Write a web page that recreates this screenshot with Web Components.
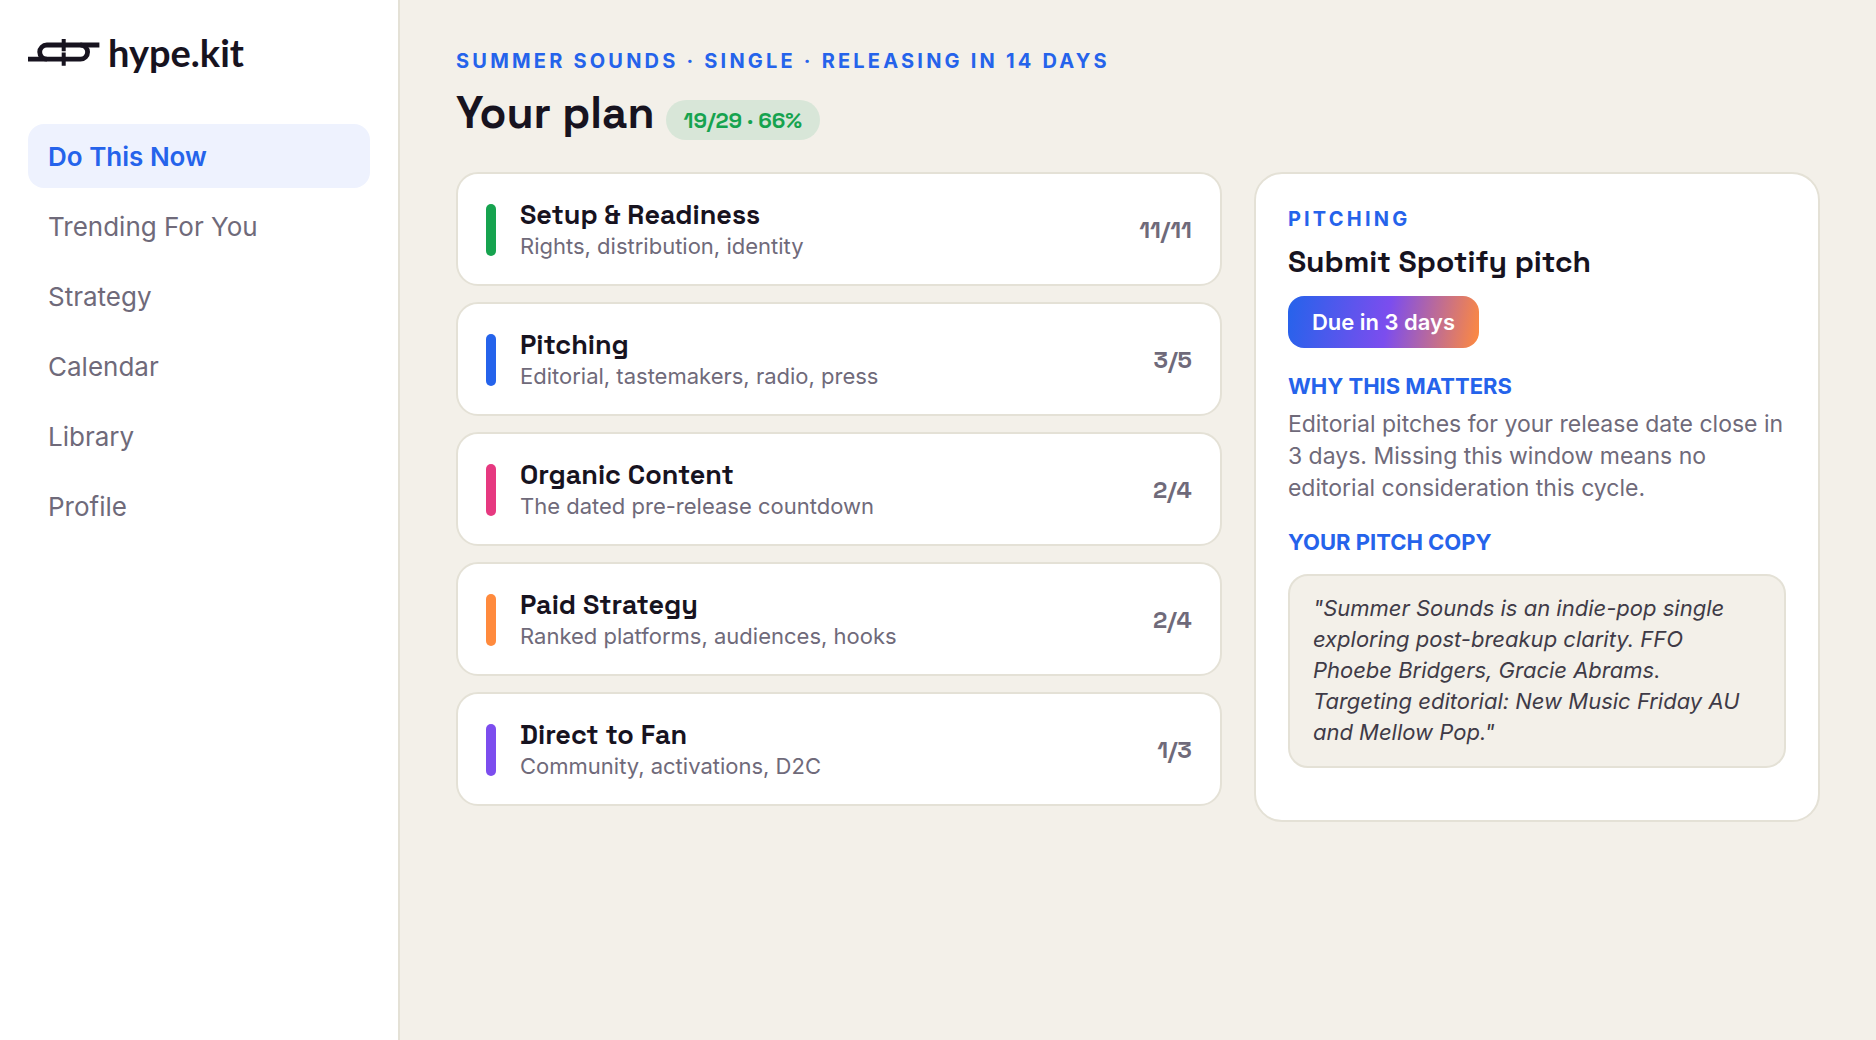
<!DOCTYPE html>
<html lang="en">
<head>
<meta charset="utf-8">
<meta name="viewport" content="width=device-width, initial-scale=1">
<title>hype.kit</title>
<style>
  :root {
    --ink: #17131f;
    --muted: #6f6a7a;
    --blue: #2563eb;
    --line: #e4e1d6;
    --paper: #f3f0e9;
    --display: "Space Grotesk", Inter, "Liberation Sans", sans-serif;
  }
  body {
    margin: 0;
    background: var(--paper);
    color: var(--ink);
    font-family: Inter, "Liberation Sans", sans-serif;
  }
</style>
</head>
<body>
<hk-app>
  <hk-sidebar slot="sidebar">
    <hk-logo slot="logo"></hk-logo>
    <hk-nav-item active>Do This Now</hk-nav-item>
    <hk-nav-item>Trending For You</hk-nav-item>
    <hk-nav-item>Strategy</hk-nav-item>
    <hk-nav-item>Calendar</hk-nav-item>
    <hk-nav-item>Library</hk-nav-item>
    <hk-nav-item>Profile</hk-nav-item>
  </hk-sidebar>
  <hk-plan-header>
    <span slot="eyebrow">SUMMER SOUNDS · SINGLE · RELEASING IN 14 DAYS</span>
    Your plan
    <span slot="progress">19/29 · 66%</span>
  </hk-plan-header>
  <hk-board>
    <hk-track style="--accent:#16a34f">Setup &amp; Readiness<span slot="note">Rights, distribution, identity</span><span slot="count">11/11</span></hk-track>
    <hk-track style="--accent:#2563eb">Pitching<span slot="note">Editorial, tastemakers, radio, press</span><span slot="count">3/5</span></hk-track>
    <hk-track style="--accent:#e63980">Organic Content<span slot="note">The dated pre-release countdown</span><span slot="count">2/4</span></hk-track>
    <hk-track style="--accent:#ff8a3d">Paid Strategy<span slot="note">Ranked platforms, audiences, hooks</span><span slot="count">2/4</span></hk-track>
    <hk-track style="--accent:#7c4dee">Direct to Fan<span slot="note">Community, activations, D2C</span><span slot="count">1/3</span></hk-track>
    <hk-task slot="detail">
      <span slot="eyebrow">PITCHING</span>
      <span slot="title">Submit Spotify pitch</span>
      <span slot="due">Due in 3 days</span>
      <span slot="why">Editorial pitches for your release date close in 3 days. Missing this window means no editorial consideration this cycle.</span>
      <span slot="copy">"Summer Sounds is an indie-pop single exploring post-breakup clarity. FFO Phoebe Bridgers, Gracie Abrams. Targeting editorial: New Music Friday AU and Mellow Pop."</span>
    </hk-task>
  </hk-board>
</hk-app>

<script>
  const define = (name, html) => {
    const template = document.createElement('template');
    template.innerHTML = html;
    customElements.define(name, class extends HTMLElement {
      constructor() {
        super();
        this.attachShadow({ mode: 'open' }).append(template.content.cloneNode(true));
      }
    });
  };

  define('hk-app', `
    <style>
      :host { display: flex; min-height: 100vh; }
      main { flex: 1; min-width: 0; box-sizing: border-box; padding: 48px 56px; }
    </style>
    <slot name="sidebar"></slot>
    <main><slot></slot></main>`);

  define('hk-sidebar', `
    <style>
      :host { display: flex; flex-direction: column; gap: 48px; flex: none; width: 400px; box-sizing: border-box;
        padding: 28px; background: #fff; border-right: 2px solid var(--line); }
      nav { display: flex; flex-direction: column; gap: 6px; }
    </style>
    <slot name="logo"></slot>
    <nav aria-label="Main"><slot></slot></nav>`);

  define('hk-logo', `
    <style>
      :host { display: flex; align-items: center; gap: 8px; height: 48px; color: var(--ink); }
      svg { flex: none; width: 72px; height: 28px; }
      span { font: 700 38px/48px Lato, sans-serif; }
    </style>
    <svg viewBox="0 0 72 28" aria-hidden="true">
      <g fill="none" stroke="currentColor" stroke-width="4.800">
        <path d="M71.400 7H18.800a7.100 7.100 0 0 0 0 14.200"/>
        <path d="M0 21.200H52.500a7.100 7.100 0 0 0 0-14.200"/>
        <path stroke-width="4" d="M35.700 1V13.200M35.700 14.600V27.700"/>
      </g>
    </svg>
    <span>hype.kit</span>`);

  define('hk-nav-item', `
    <style>
      :host { display: block; }
      a { display: block; padding: 17px 20px 15px; border-radius: 16px; color: var(--muted);
        font-size: 26px; line-height: 32px; text-decoration: none; }
      :host([active]) a { background: #eef2fe; color: var(--blue); font-weight: 600; }
    </style>
    <a href="#"><slot></slot></a>`);

  define('hk-plan-header', `
    <style>
      :host { display: block; margin-bottom: 28px; }
      p { margin: 0 0 8px; color: var(--blue); font-size: 20px; line-height: 26px; font-weight: 700; letter-spacing: 0.16em; }
      div { display: flex; align-items: center; gap: 11px; }
      h1 { margin: 0; font: 600 44px/62px var(--display); }
      .pill { margin-top: 14px; padding: 6px 18px; border-radius: 20px; background: #d8e6d8; color: #16a34f;
        font: 600 22px/28px var(--display); }
    </style>
    <p><slot name="eyebrow"></slot></p>
    <div><h1><slot></slot></h1><span class="pill"><slot name="progress"></slot></span></div>`);

  define('hk-board', `
    <style>
      :host { display: grid; grid-template-columns: 1.15fr 0.85fr; gap: 32px; align-items: start; }
      section { display: flex; flex-direction: column; gap: 16px; min-width: 0; }
    </style>
    <section><slot></slot></section>
    <slot name="detail"></slot>`);

  define('hk-track', `
    <style>
      :host { display: flex; align-items: center; gap: 24px; padding: 25px 28px 24px; background: #fff;
        border: 2px solid var(--line); border-radius: 22px; }
      i { flex: none; width: 10px; height: 52px; border-radius: 5px; background: var(--accent); }
      div { flex: 1; min-width: 0; }
      h2 { margin: 0 0 1px; font: 700 27px/32px var(--display); }
      p { margin: 0; color: var(--muted); font-size: 22px; line-height: 28px; }
      b { color: var(--muted); font: 600 24px/32px var(--display); }
    </style>
    <i></i>
    <div><h2><slot></slot></h2><p><slot name="note"></slot></p></div>
    <b><slot name="count"></slot></b>`);

  define('hk-task', `
    <style>
      :host { display: block; padding: 32px; background: #fff; border: 2px solid var(--line); border-radius: 28px; }
      .eyebrow { margin: 0 0 10px; color: var(--blue); font-size: 20px; line-height: 26px; font-weight: 700; letter-spacing: 0.16em; }
      h2 { margin: 0 0 14px; font: 600 30px/40px var(--display); }
      button { display: block; margin: 0 0 24px; padding: 12px 24px; border: 0; border-radius: 16px; color: #fff;
        background: linear-gradient(100deg, #2563eb, #7c4dee 52%, #ff8a3d); font: 600 22px/28px Inter, sans-serif; }
      h3 { margin: 0; color: var(--blue); font-size: 22px; line-height: 28px; font-weight: 700; }
      .why { margin: 8px 0 24px; color: var(--muted); font-size: 23px; line-height: 32px; }
      blockquote { margin: 18px 0 20px; padding: 17px 23px 18px; background: var(--paper); border: 2px solid var(--line);
        border-radius: 20px; color: #3f3b47; font-size: 22px; line-height: 31px; font-style: italic; }
    </style>
    <p class="eyebrow"><slot name="eyebrow"></slot></p>
    <h2><slot name="title"></slot></h2>
    <button type="button"><slot name="due"></slot></button>
    <h3>WHY THIS MATTERS</h3>
    <p class="why"><slot name="why"></slot></p>
    <h3>YOUR PITCH COPY</h3>
    <blockquote><slot name="copy"></slot></blockquote>`);
</script>
</body>
</html>
